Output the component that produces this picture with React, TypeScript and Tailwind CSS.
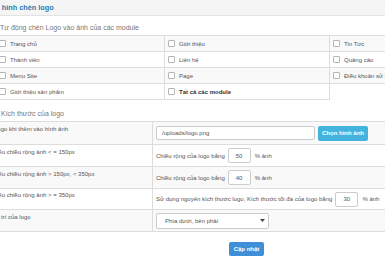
import React from "react";

const Check = () => (
  <span className="inline-block w-[7px] h-[7px] border border-[#b5b5b5] rounded-[1px] bg-white shrink-0" />
);

type Cell = { label?: string; bold?: boolean; empty?: boolean };

const rows: Cell[][] = [
  [{ label: "Trang chủ" }, { label: "Giới thiệu" }, { label: "Tin Tức" }],
  [{ label: "Thành viên" }, { label: "Liên hệ" }, { label: "Quảng cáo" }],
  [{ label: "Menu Site" }, { label: "Page" }, { label: "Điều khoản sử dụng" }],
  [{ label: "Giới thiệu sản phẩm" }, { label: "Tất cả các module", bold: true }, { empty: true }],
];

export default function App() {
  return (
    <div
      className="w-[385px] h-[257px] overflow-hidden bg-white text-[#555] text-[6px] leading-[8px]"
      style={{ fontFamily: '"Liberation Sans", Arial, sans-serif' }}
    >
      {/* header */}
      <div className="h-[16px] bg-[#f5f5f5] border-b border-[#e3e3e3] flex items-center">
        <span className="ml-[-14px] text-[7.3px] font-bold text-[#2b78b0] whitespace-nowrap">
          Cấu hình chèn logo
        </span>
      </div>

      <div className="mt-[8px] h-[8px] text-[7px] leading-[8px] text-[#777] whitespace-nowrap">
        Tự động chèn Logo vào ảnh của các module
      </div>

      {/* module table */}
      <div className="mt-[3px] ml-[-4px] w-[499px] border-t border-[#ddd]">
        {rows.map((r, ri) => (
          <div
            key={ri}
            className={`grid grid-cols-[169px_165px_165px] h-[16px] ${ri % 2 === 0 ? "bg-[#f9f9f9]" : "bg-white"}`}
          >
            {r.map((c, ci) => (
              <div
                key={ci}
                className={`flex items-center gap-[4px] pl-[3px] whitespace-nowrap ${ci < 2 ? "border-r border-[#ddd]" : ""} ${c.empty ? "bg-white" : "border-b border-[#ddd]"}`}
              >
                {!c.empty && (
                  <>
                    <Check />
                    <span className={c.bold ? "font-bold text-[#333]" : ""}>{c.label}</span>
                  </>
                )}
              </div>
            ))}
          </div>
        ))}
      </div>

      <div className="mt-[10px] ml-[1px] h-[8px] text-[7px] leading-[8px] text-[#777] whitespace-nowrap">
        Kích thước của logo
      </div>

      {/* size table */}
      <div className="mt-[3px] ml-[-9px] w-[420px] border-t border-[#ddd]">
        {/* row 1 */}
        <div className="flex h-[23px] border-b border-[#ddd] bg-[#f9f9f9]">
          <div className="w-[162px] shrink-0 border-r border-[#ddd] pl-[3px] pt-[3px] whitespace-nowrap">
            Logo khi thêm vào hình ảnh
          </div>
          <div className="flex items-center pl-[3px] gap-[3px]">
            <div className="w-[159px] h-[14px] border border-[#ccc] rounded-[2px] bg-white flex items-center pl-[5px] text-[#555]">
              /uploads/logo.png
            </div>
            <div className="w-[50px] h-[15px] rounded-[2px] bg-[#44b3de] text-white font-bold flex items-center justify-center whitespace-nowrap">
              Chọn hình ảnh
            </div>
          </div>
        </div>
        {/* row 2 */}
        <div className="flex h-[22px] border-b border-[#ddd] bg-white">
          <div className="w-[162px] shrink-0 border-r border-[#ddd] pl-[3px] pt-[3px] whitespace-nowrap">
            Nếu chiều rộng ảnh &lt; = 150px
          </div>
          <div className="flex items-center pl-[3px] whitespace-nowrap">
            <span>Chiều rộng của logo bằng</span>
            <div className="ml-[3px] w-[23px] h-[15px] border border-[#ccc] rounded-[2px] bg-white flex items-center pl-[7px]">
              50
            </div>
            <span className="ml-[4px]">% ảnh</span>
          </div>
        </div>
        {/* row 3 */}
        <div className="flex h-[22px] border-b border-[#ddd] bg-[#f9f9f9]">
          <div className="w-[162px] shrink-0 border-r border-[#ddd] pl-[3px] pt-[3px] whitespace-nowrap">
            Nếu chiều rộng ảnh &gt; 150px, &lt; 350px
          </div>
          <div className="flex items-center pl-[3px] whitespace-nowrap">
            <span>Chiều rộng của logo bằng</span>
            <div className="ml-[3px] w-[23px] h-[15px] border border-[#ccc] rounded-[2px] bg-white flex items-center pl-[7px]">
              40
            </div>
            <span className="ml-[4px]">% ảnh</span>
          </div>
        </div>
        {/* row 4 */}
        <div className="flex h-[21px] border-b border-[#ddd] bg-white">
          <div className="w-[162px] shrink-0 border-r border-[#ddd] pl-[3px] pt-[2px] whitespace-nowrap">
            Nếu chiều rộng ảnh &gt; = 350px
          </div>
          <div className="flex items-center pl-[3px] whitespace-nowrap">
            <span>Sử dụng nguyên kích thước logo, Kích thước tối đa của logo bằng</span>
            <div className="ml-[3px] w-[23px] h-[15px] border border-[#ccc] rounded-[2px] bg-white flex items-center pl-[7px]">
              30
            </div>
            <span className="ml-[4px]">% ảnh</span>
          </div>
        </div>
        {/* row 5 */}
        <div className="flex h-[22px] border-b border-[#ddd] bg-[#f9f9f9]">
          <div className="w-[162px] shrink-0 border-r border-[#ddd] pl-[3px] pt-[3px] whitespace-nowrap">
            Vị trí của logo
          </div>
          <div className="flex items-center pl-[3px]">
            <div className="w-[113px] h-[16px] border border-[#ccc] rounded-[2px] bg-white flex items-center justify-between pl-[8px] pr-[3px] whitespace-nowrap">
              <span>Phía dưới, bên phải</span>
              <svg width="5" height="3" viewBox="0 0 5 3">
                <path d="M0 0 L5 0 L2.5 3 Z" fill="#444" />
              </svg>
            </div>
          </div>
        </div>
      </div>

      <div className="mt-[10px] flex">
        <div className="ml-[229px] w-[35px] h-[14px] rounded-[2px] bg-[#3f8fd8] text-white font-bold flex items-center justify-center whitespace-nowrap">
          Cập nhật
        </div>
      </div>
    </div>
  );
}
